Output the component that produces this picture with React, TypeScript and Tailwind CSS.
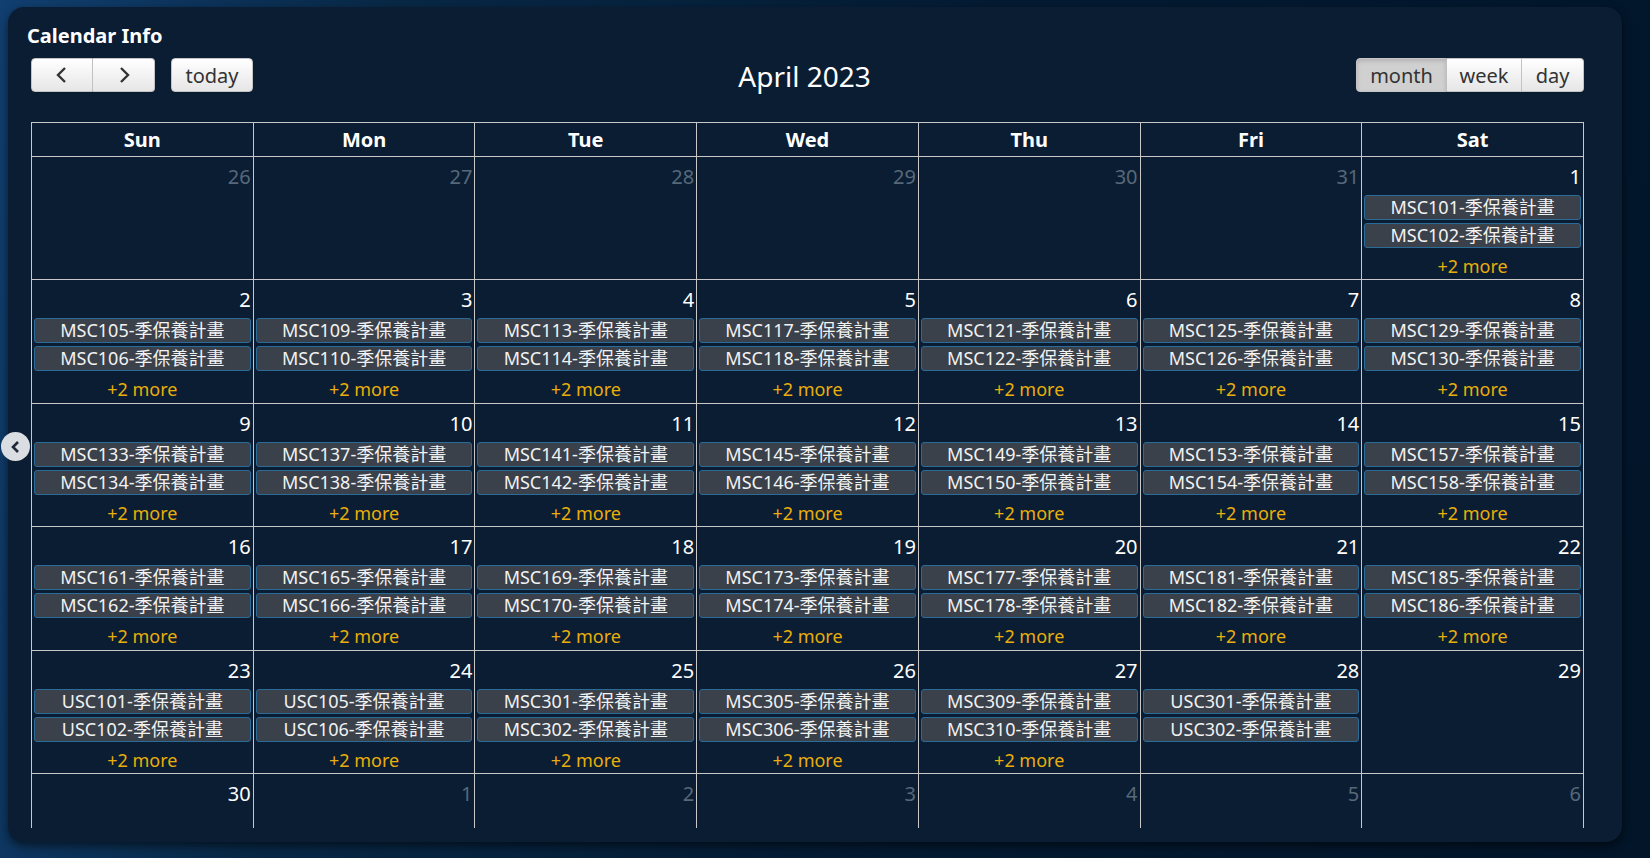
import React from 'react';

type Day = { d: number; other?: boolean; events: string[]; more?: boolean };

const font = { fontFamily: '"Noto Sans", "Noto Sans CJK TC", sans-serif' };

const ev = (prefix: string, n: number) => [`${prefix}${n}-季保養計畫`, `${prefix}${n + 1}-季保養計畫`];

function buildWeeks(): Day[][] {
  const weeks: Day[][] = [];
  weeks.push([
    ...[26, 27, 28, 29, 30, 31].map((d) => ({ d, other: true, events: [] })),
    { d: 1, events: ev('MSC', 101), more: true },
  ]);
  const starts = [105, 133, 161];
  starts.forEach((s, w) => {
    weeks.push(
      Array.from({ length: 7 }, (_, i) => ({
        d: 2 + w * 7 + i,
        events: ev('MSC', s + i * 4),
        more: true,
      }))
    );
  });
  weeks.push([
    { d: 23, events: ev('USC', 101), more: true },
    { d: 24, events: ev('USC', 105), more: true },
    { d: 25, events: ev('MSC', 301), more: true },
    { d: 26, events: ev('MSC', 305), more: true },
    { d: 27, events: ev('MSC', 309), more: true },
    { d: 28, events: ev('USC', 301) },
    { d: 29, events: [] },
  ]);
  weeks.push([
    { d: 30, events: [] },
    ...[1, 2, 3, 4, 5, 6].map((d) => ({ d, other: true, events: [] })),
  ]);
  return weeks;
}

const weeks = buildWeeks();
const dayNames = ['Sun', 'Mon', 'Tue', 'Wed', 'Thu', 'Fri', 'Sat'];

function Chevron({ dir, className }: { dir: 'left' | 'right'; className?: string }) {
  return (
    <svg width="14" height="18" viewBox="0 0 14 18" className={className}>
      <polyline
        points={dir === 'left' ? '10,2 3,9 10,16' : '4,2 11,9 4,16'}
        fill="none"
        stroke="#333"
        strokeWidth="2.4"
      />
    </svg>
  );
}

const btn =
  'h-[34px] flex items-center justify-center border border-[#c4c4c4] bg-[linear-gradient(#ffffff,#e6e6e6)] text-[#333] text-[20px] shadow-[0_1px_1px_rgba(0,0,0,0.1)]';

function DayCell({ day }: { day: Day }) {
  return (
    <div className="h-[123.4px] border-r border-b border-[#c8c8c8] flex flex-col overflow-hidden">
      <div
        className={`text-right pr-[2px] pt-[6px] text-[20px] leading-[28px] ${
          day.other ? 'text-[#576879]' : 'text-white'
        }`}
      >
        {day.d}
      </div>
      {day.events.length > 0 && (
        <div className="mt-[4px] flex flex-col gap-[3px] pl-[2px] pr-[2px]">
          {day.events.map((e) => (
            <div
              key={e}
              className="h-[25px] border border-[#2a6b97] bg-[#3a414b] rounded-[3px] text-[18px] leading-[23px] text-center text-[#f2f2f2]"
            >
              {e}
            </div>
          ))}
        </div>
      )}
      {day.more && (
        <div className="mt-[6px] text-center text-[18px] leading-[24px] text-[#e9ae0b]">+2 more</div>
      )}
    </div>
  );
}

export default function App() {
  return (
    <div
      style={font}
      className="relative w-[1650px] h-[858px] overflow-hidden bg-[linear-gradient(100deg,#113f70_0%,#082846_22%,#041b33_55%,#021529_100%)]"
    >
      <div className="ml-[8px] mt-[7px] w-[1614px] h-[835px] rounded-[16px] bg-[#0a1d33] shadow-[0_4px_10px_rgba(0,0,0,0.55)] pl-[23px] pr-[38px] pt-[16px]">
        <div className="-ml-[4px] text-white text-[20px] font-bold leading-[26px]">Calendar Info</div>

        <div className="mt-[9px] h-[34px] flex items-center justify-between">
          <div className="flex items-center gap-[16px] w-[222px]">
            <div className="flex">
              <div className={`${btn} w-[62px] rounded-l-[4px]`}>
                <Chevron dir="left" />
              </div>
              <div className={`${btn} w-[62px] rounded-r-[4px] border-l-0`}>
                <Chevron dir="right" />
              </div>
            </div>
            <div className={`${btn} w-[82px] rounded-[4px] pt-[2px]`}>today</div>
          </div>
          <div className="text-white text-[28px] h-[34px] leading-[36px]">April 2023</div>
          <div className="flex w-[228px]">
            <div className={`${btn} w-[91px] rounded-l-[4px] bg-[#d0d0d0] bg-none shadow-[inset_0_2px_4px_rgba(0,0,0,0.15)] pt-[2px]`}>
              month
            </div>
            <div className={`${btn} w-[75px] border-l-0 pt-[2px]`}>week</div>
            <div className={`${btn} w-[62px] border-l-0 rounded-r-[4px] pt-[2px]`}>day</div>
          </div>
        </div>

        <div className="mt-[30px] w-[1553px] h-[706px] overflow-hidden border-t border-l border-[#c8c8c8]">
          <div className="grid grid-cols-7">
            {dayNames.map((n) => (
              <div
                key={n}
                className="h-[34px] border-r border-b border-[#c8c8c8] flex items-center justify-center text-white text-[20px] font-bold"
              >
                {n}
              </div>
            ))}
          </div>
          {weeks.map((w, i) => (
            <div key={i} className="grid grid-cols-7">
              {w.map((day, j) => (
                <DayCell key={j} day={day} />
              ))}
            </div>
          ))}
        </div>
      </div>

      <div className="absolute left-[1px] top-[432px] w-[29px] h-[29px] rounded-full bg-[#dadde1] flex items-center justify-center">
        <svg width="12" height="14" viewBox="0 0 12 14">
          <polyline points="8,2 3,7 8,12" fill="none" stroke="#1f2937" strokeWidth="2.6" />
        </svg>
      </div>
    </div>
  );
}
